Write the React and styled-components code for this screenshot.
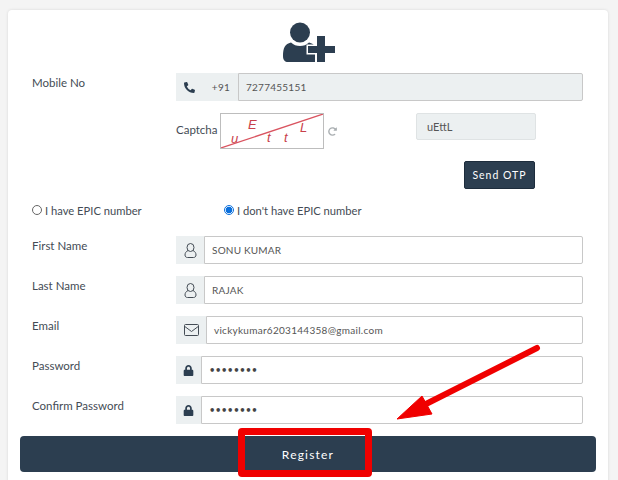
import React from "react";
import styled, { createGlobalStyle } from "styled-components";
import { FaPhoneAlt, FaLock, FaRedoAlt } from "react-icons/fa";

const Global = createGlobalStyle`
  html, body { margin: 0; padding: 0; background: #f4f4f4; height: 480px; overflow: hidden; }
  * { box-sizing: border-box; }
  body { font-family: Lato, "Open Sans", sans-serif; color: #444; }
`;

const Page = styled.div`
  position: relative;
  width: 618px;
  height: 480px;
  overflow: hidden;
  padding: 10px 10px 0 8px;
`;
const Card = styled.div`
  background: #fff;
  border-radius: 4px 4px 0 0;
  height: 480px;
  padding: 12px 12px 0;
  box-shadow: 0 0 3px rgba(0, 0, 0, 0.12);
`;
const Header = styled.div`
  display: flex;
  justify-content: center;
  height: 51px;
  padding-left: 1px;
`;
const Row = styled.div`
  display: flex;
  padding-left: 12px;
  height: 28px;
  margin-bottom: 12px;
`;
const Label = styled.label`
  width: 144px;
  flex: none;
  padding-top: 1px;
  font-size: 11.5px;
  line-height: 18px;
  color: #444c55;
`;
const Group = styled.div`
  display: flex;
  width: 407px;
  height: 28px;
`;
const Addon = styled.span`
  flex: none;
  display: flex;
  align-items: center;
  justify-content: center;
  width: ${(p) => p.$w}px;
  padding-left: ${(p) => p.$shift ?? 0}px;
  background: #ecf0f1;
  color: ${(p) => p.$color || "#2c3e50"};
  font-size: 10px;
  letter-spacing: 0.3px;
`;
const Field = styled.div`
  flex: 1;
  display: flex;
  align-items: center;
  border: 1px solid #c8c8c8;
  border-radius: 0 2px 2px 0;
  padding: 0 7px;
  background: ${(p) => (p.$muted ? "#ecf0f1" : "#fff")};
  color: #555;
  font-size: 10px;
  letter-spacing: ${(p) => p.$track ?? 0.2}px;
`;
const Dots = styled.span`
  font-family: "DejaVu Sans", sans-serif;
  font-size: 10px;
  font-weight: 700;
  letter-spacing: -0.35px;
  color: #444;
`;
const CaptchaRow = styled.div`
  display: flex;
  height: 36px;
  padding-left: 156px;
  margin-bottom: 12px;
`;
const CaptchaLabel = styled.span`
  width: 44px;
  font-size: 11.5px;
  line-height: 34px;
  color: #444c55;
`;
const CaptchaImage = styled.svg`
  flex: none;
  display: block;
  width: 104px;
  height: 36px;
  border: 1px solid #bdbdbd;
  background: #fff;
`;
const CaptchaText = styled.text`
  font-family: "Liberation Sans", sans-serif;
  font-style: italic;
  font-size: 13px;
  fill: #c8404a;
`;
const Refresh = styled.span`
  width: 92px;
  flex: none;
  display: flex;
  align-items: center;
  padding-left: 4px;
  color: #a9aeb1;
  font-size: 9px;
  height: 34px;
  margin-top: 1px;
`;
const CaptchaInput = styled.div`
  width: 120px;
  height: 27px;
  background: #ecf0f1;
  border: 1px solid #dfe3e4;
  border-radius: 2px;
  padding: 0 10px;
  font-size: 11px;
  line-height: 25px;
  color: #555;
`;
const OtpRow = styled.div`
  display: flex;
  justify-content: flex-end;
  padding-right: 61px;
  height: 28px;
  margin-bottom: 13px;
`;
const SmallButton = styled.button`
  width: 71px;
  height: 28px;
  border: 1px solid #1d2c3c;
  border-radius: 2px;
  background: #2c3e50;
  color: #fff;
  font: 400 10.5px Lato, sans-serif;
  letter-spacing: 1px;
  padding: 0;
`;
const RadioRow = styled.div`
  display: flex;
  padding-left: 12px;
  height: 16px;
  margin-bottom: 18px;
  align-items: center;
`;
const RadioItem = styled.label`
  display: flex;
  align-items: center;
  gap: 3px;
  width: ${(p) => p.$w}px;
  font-size: 11.2px;
  color: #444c55;
`;
const Radio = styled.span`
  flex: none;
  width: 10px;
  height: 10px;
  border-radius: 50%;
  border: 1px solid ${(p) => (p.$on ? "#0a6fdc" : "#666")};
  background: ${(p) => (p.$on ? "radial-gradient(circle, #0a6fdc 0 3.2px, #fff 3.6px)" : "#fff")};
`;
const Submit = styled.button`
  display: block;
  width: 576px;
  height: 36px;
  border: none;
  border-radius: 4px;
  background: #2c3e50;
  color: #fff;
  font: 400 12px Lato, sans-serif;
  letter-spacing: 1.2px;
  padding: 0;
`;
const RedBox = styled.div`
  position: absolute;
  left: 238px;
  top: 428px;
  width: 134px;
  height: 49px;
  border: 7px solid #f00000;
  border-radius: 4px;
`;
const Arrow = styled.svg`
  position: absolute;
  left: 390px;
  top: 340px;
  width: 155px;
  height: 85px;
`;

const UserPlus = () => (
  <svg width="52" height="40" viewBox="0 0 52 40">
    <circle cx="17" cy="10.500" r="10" fill="#2c3e50" />
    <path d="M0 34c0-8 2-12 8-13.500 2.500 2.500 5.500 3.500 9 3.500s6.500-1 9-3.500c3 .8 5 2 6 4V40H5c-3 0-5-2-5-6z" fill="#2c3e50" />
    <path
      d="M34 14h8v10h10v7H42v9h-8v-9h-9v-7h9z"
      fill="#2c3e50"
      stroke="#fff"
      strokeWidth="3"
      paintOrder="stroke"
    />
  </svg>
);
const UserLine = () => (
  <svg width="13" height="15" viewBox="0 0 13 15" fill="none" stroke="#444c55" strokeWidth="1">
    <ellipse cx="6.500" cy="4.500" rx="3.500" ry="4" />
    <path d="M4 7.500C2 8.500 1 10 1 12c0 1.500 1 2.500 2.500 2.500h6c1.500 0 2.500-1 2.500-2.500 0-2-1-3.500-3-4.500" />
  </svg>
);
const MailLine = () => (
  <svg width="15" height="12" viewBox="0 0 15 12" fill="none" stroke="#444c55" strokeWidth="1">
    <rect x="0.500" y="0.500" width="14" height="11" rx="1" />
    <path d="M0.800 2.500L7.500 7.500L14.200 2.500" />
  </svg>
);

const people = [
  ["First Name", "SONU KUMAR"],
  ["Last Name", "RAJAK"],
];

export default function App() {
  return (
    <Page>
      <Global />
      <Card>
        <Header><UserPlus /></Header>
        <Row>
          <Label>Mobile No</Label>
          <Group>
            <Addon $w={27}><FaPhoneAlt size={11} /></Addon>
            <Addon $w={35} $shift={1} $color="#555">+91</Addon>
            <Field $muted $track={0.25}>7277455151</Field>
          </Group>
        </Row>
        <CaptchaRow>
          <CaptchaLabel>Captcha</CaptchaLabel>
          <CaptchaImage viewBox="0 0 102 34">
            <CaptchaText x="10" y="29">u</CaptchaText>
            <CaptchaText x="27" y="15">E</CaptchaText>
            <CaptchaText x="46" y="28">t</CaptchaText>
            <CaptchaText x="63" y="28">t</CaptchaText>
            <CaptchaText x="79" y="18">L</CaptchaText>
            <line x1="0" y1="34" x2="102" y2="0" stroke="#d9535f" strokeWidth="1.2" />
          </CaptchaImage>
          <Refresh><FaRedoAlt /></Refresh>
          <CaptchaInput>uEttL</CaptchaInput>
        </CaptchaRow>
        <OtpRow><SmallButton>Send OTP</SmallButton></OtpRow>
        <RadioRow>
          <RadioItem $w={192}><Radio />I have EPIC number</RadioItem>
          <RadioItem $w={200}><Radio $on />I don't have EPIC number</RadioItem>
        </RadioRow>
        {people.map(([l, v]) => (
          <Row key={l}>
            <Label>{l}</Label>
            <Group>
              <Addon $w={28}><UserLine /></Addon>
              <Field>{v}</Field>
            </Group>
          </Row>
        ))}
        <Row>
          <Label>Email</Label>
          <Group>
            <Addon $w={30}><MailLine /></Addon>
            <Field $track={0.28}>vickykumar6203144358@gmail.com</Field>
          </Group>
        </Row>
        {["Password", "Confirm Password"].map((l) => (
          <Row key={l}>
            <Label>{l}</Label>
            <Group>
              <Addon $w={25}><FaLock size={11} /></Addon>
              <Field><Dots>••••••••</Dots></Field>
            </Group>
          </Row>
        ))}
        <Submit>Register</Submit>
      </Card>
      <RedBox />
      <Arrow viewBox="0 0 155 85">
        <path d="M147 8 L32 66" stroke="#f00000" strokeWidth="6" strokeLinecap="round" fill="none" />
        <path d="M7 79 L32 56 L42 74 Z" fill="#f00000" stroke="#f00000" strokeWidth="1" strokeLinejoin="round" />
      </Arrow>
    </Page>
  );
}
